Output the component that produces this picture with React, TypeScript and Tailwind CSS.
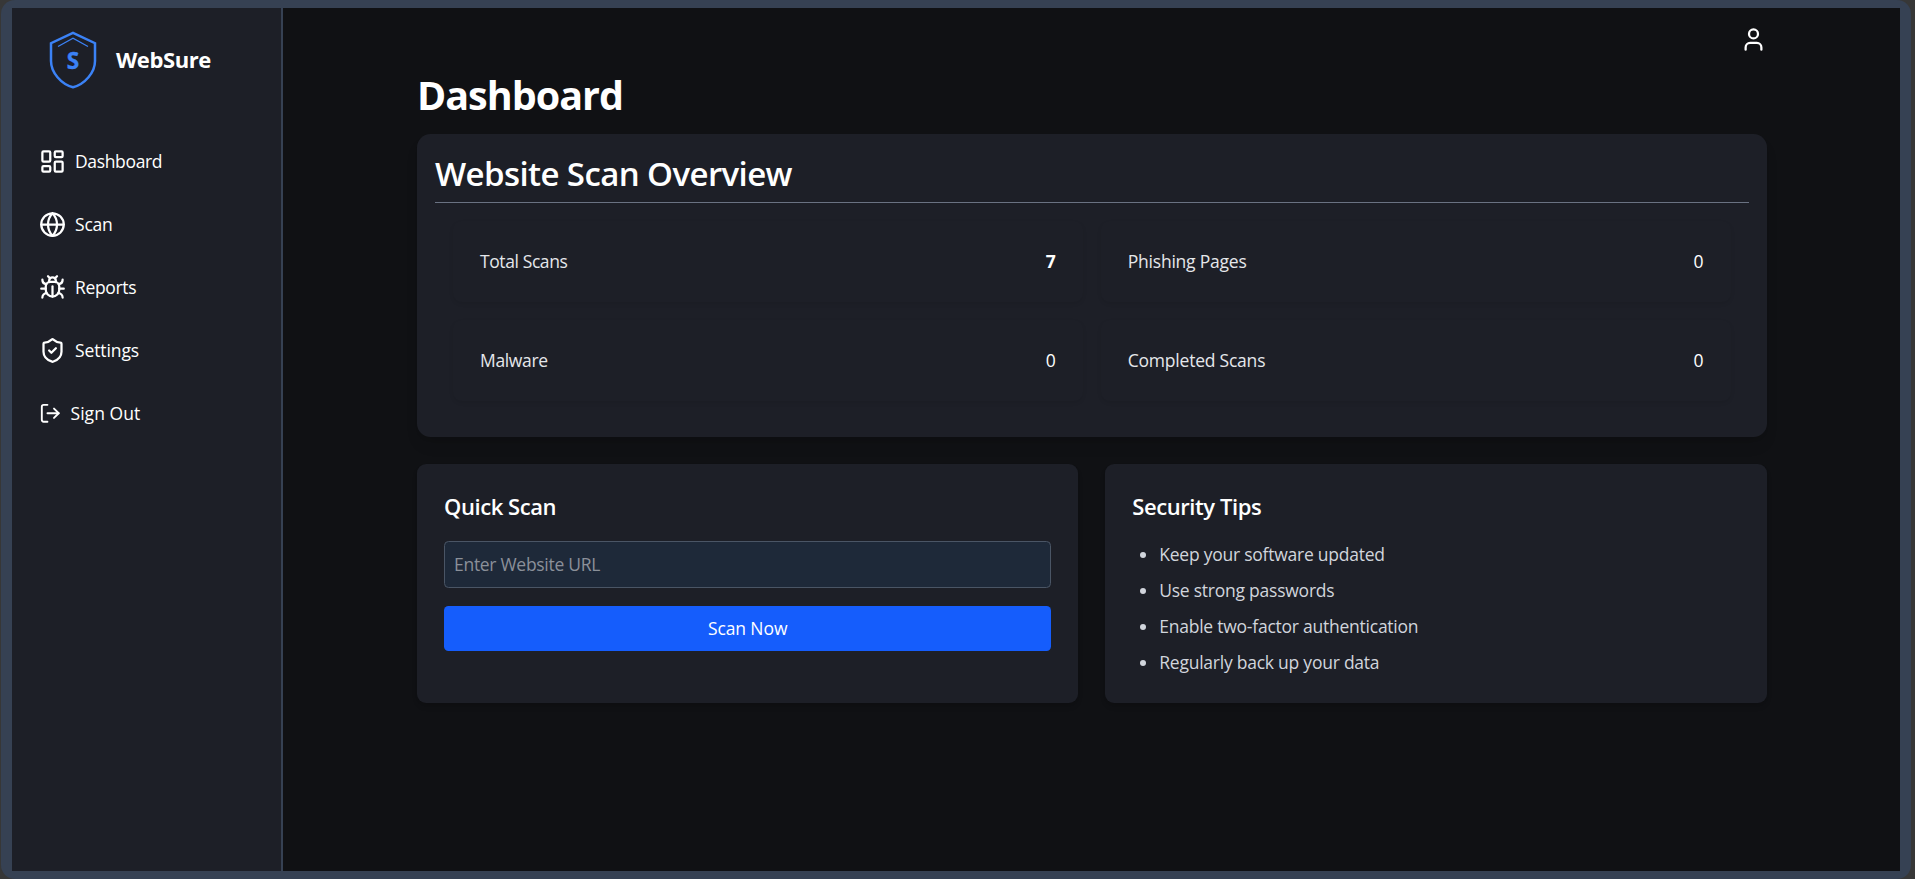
import { Bug, Globe, LayoutDashboard, LogOut, ShieldCheck, User } from "lucide-react";
import type { ReactNode } from "react";

function Logo() {
  return (
    <svg className="h-[72px] w-[72px]" viewBox="0 0 72 72" fill="none">
      <path
        d="M36 8.8 L58 19.2 V37 C58 48.5 48 60 36 63.3 C24 60 14 48.5 14 37 V19.2 Z"
        stroke="#3b82f6"
        strokeWidth="2.5"
      />
      <path d="M21 22.5 L36 14.2 L51 22.5" stroke="#3b82f6" strokeWidth="1.25" />
      <text
        x="36"
        y="44.5"
        textAnchor="middle"
        fill="#3b82f6"
        stroke="#3b82f6"
        strokeWidth="0.4"
        fontSize="22.5"
        fontWeight="700"
        fontFamily="'Open Sans', sans-serif"
      >
        S
      </text>
    </svg>
  );
}

function NavItem({ icon, label, tracking }: { icon: ReactNode; label: string; tracking: string }) {
  return (
    <a className="flex h-[27px] items-center gap-[9px]">
      {icon}
      <span className={tracking}>{label}</span>
    </a>
  );
}

function Stat({ label, value, tracking, bold }: { label: string; value: string; tracking: string; bold?: boolean }) {
  return (
    <div className="flex h-[81px] items-center justify-between rounded-[9px] px-[27px] shadow-[0_2px_4px_rgba(0,0,0,0.08)]">
      <span className={`text-gray-200 ${tracking}`}>{label}</span>
      <span className={bold ? "font-bold" : ""}>{value}</span>
    </div>
  );
}

const tips = [
  "Keep your software updated",
  "Use strong passwords",
  "Enable two-factor authentication",
  "Regularly back up your data",
];

export default function App() {
  return (
    <div className="h-[879px] w-[1915px] overflow-hidden bg-[#373737] pr-[4px] pl-px font-['Open_Sans',sans-serif] text-[17.5px] leading-[27px] text-white">
      <div className="h-full rounded-[14px] bg-[#364153] px-[11px] py-[8px]">
        <div className="flex h-full bg-[#101114]">
          <aside className="w-[271px] shrink-0 border-r-2 border-[#364153] bg-[#1d1f27]">
            <div className="flex items-center gap-[7px] pt-[16px] pl-[25px]">
              <Logo />
              <span className="pb-[2px] text-[22px] font-bold tracking-[-0.4px]">WebSure</span>
            </div>
            <nav className="mt-[52px] flex flex-col gap-[36px] pl-[27px]">
              <NavItem tracking="tracking-[-0.35px]" label="Dashboard" icon={<LayoutDashboard size={27} />} />
              <NavItem tracking="tracking-[-0.2px]" label="Scan" icon={<Globe size={27} />} />
              <NavItem tracking="tracking-[-0.35px]" label="Reports" icon={<Bug size={27} />} />
              <NavItem tracking="tracking-[-0.1px]" label="Settings" icon={<ShieldCheck size={27} />} />
              <NavItem tracking="tracking-[0.05px]" label="Sign Out" icon={<LogOut size={22.5} />} />
            </nav>
          </aside>
          <main className="flex-1 pr-[133.5px] pl-[134px]">
            <div className="flex h-[62px] justify-end pt-[18px]">
              <User size={27} />
            </div>
            <h1 className="h-[64px] text-[39.5px] leading-[50px] font-bold tracking-[-1px]">Dashboard</h1>
            <section className="rounded-[13.5px] bg-[#1d1f27] p-[18px] shadow-lg">
              <h2 className="h-[51px] border-b border-[#6a7282] text-[33px] leading-[44px] font-semibold tracking-[-0.6px]">
                Website Scan Overview
              </h2>
              <div className="grid grid-cols-2 gap-[18px] p-[18px]">
                <Stat tracking="tracking-[-0.4px]" label="Total Scans" value="7" bold />
                <Stat tracking="tracking-[-0.22px]" label="Phishing Pages" value="0" />
                <Stat tracking="tracking-[-0.35px]" label="Malware" value="0" />
                <Stat tracking="tracking-[-0.22px]" label="Completed Scans" value="0" />
              </div>
            </section>
            <div className="mt-[27px] grid h-[238px] grid-cols-2 gap-[27px]">
              <section className="rounded-[9px] bg-[#1d1f27] p-[27px] shadow-md">
                <h3 className="mb-[18px] text-[22px] leading-[31.5px] font-semibold tracking-[-0.43px]">Quick Scan</h3>
                <input
                  className="block h-[47px] w-full rounded-[4.5px] border border-[#4a5565] bg-[#1e2939] px-[9px] tracking-[-0.29px] placeholder:text-[#8b9099]"
                  placeholder="Enter Website URL"
                />
                <button className="mt-[18px] block h-[45px] w-full rounded-[4.5px] bg-[#155dfc] tracking-[-0.1px]">
                  Scan Now
                </button>
              </section>
              <section className="rounded-[9px] bg-[#1d1f27] p-[27px] shadow-md">
                <h3 className="mb-[18px] text-[22px] leading-[31.5px] font-semibold tracking-[-0.42px]">
                  Security Tips
                </h3>
                <ul className="list-disc space-y-[9px] pl-[27px] tracking-[-0.24px] text-[#d1d5dc]">
                  {tips.map((tip) => (
                    <li key={tip}>{tip}</li>
                  ))}
                </ul>
              </section>
            </div>
          </main>
        </div>
      </div>
    </div>
  );
}
